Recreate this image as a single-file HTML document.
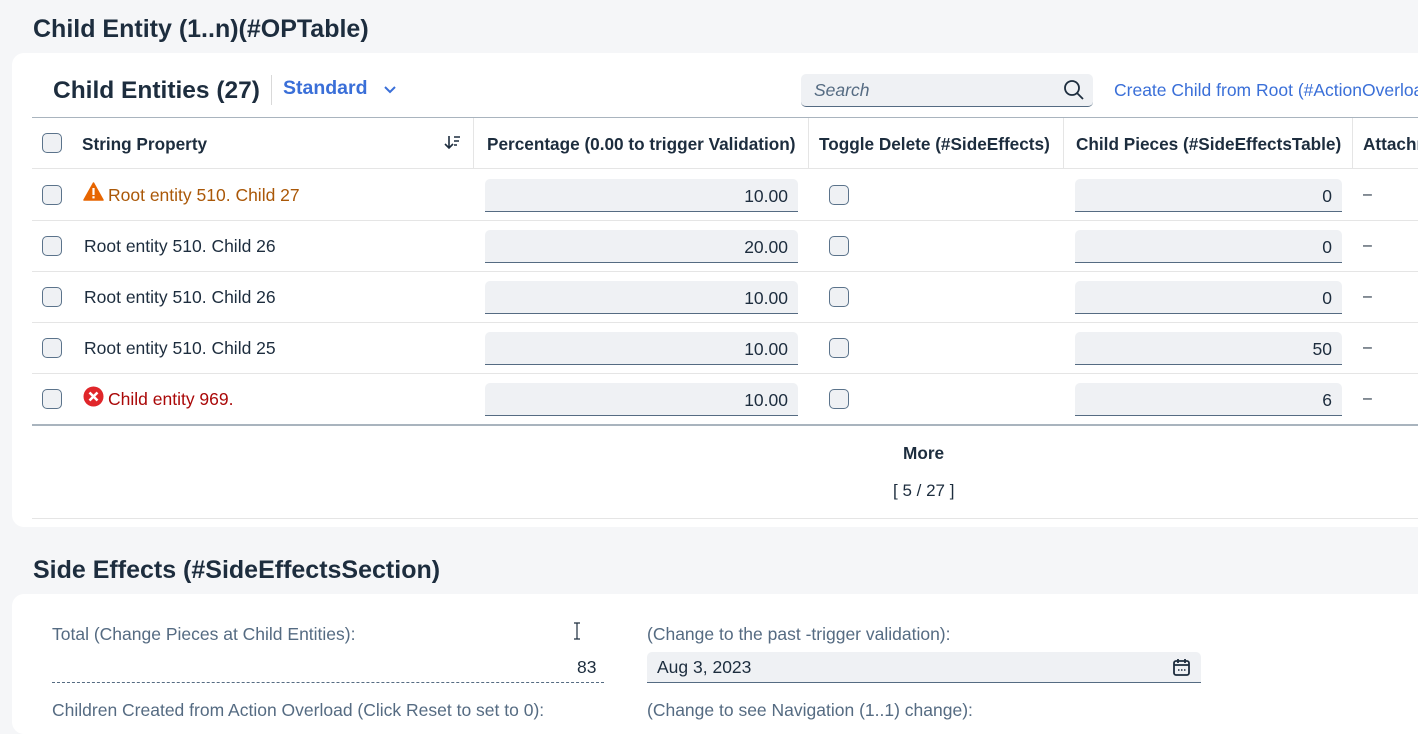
<!DOCTYPE html>
<html><head><meta charset="utf-8"><style>
*{box-sizing:border-box;margin:0;padding:0}
body{width:1418px;height:718px;overflow:hidden;background:#f5f6f8;font-family:"Liberation Sans",sans-serif;color:#1d2d3e;position:relative}
.a{position:absolute;white-space:nowrap}
.card{position:absolute;background:#fff;border-radius:12px}
.h1{font-size:25px;font-weight:bold}
.hl{position:absolute;height:1px;background:#e5e5e5}
.vl{position:absolute;width:1px;background:#e5e5e5}
.cb{position:absolute;width:20px;height:20px;border:1px solid #5b738b;border-radius:5px;background:#eff1f4}
.th{position:absolute;font-size:17.2px;font-weight:bold;top:134px}
.td{position:absolute;font-size:17.5px}
.inp{position:absolute;height:33px;background:#eff1f4;border-radius:5px 5px 0 0;border-bottom:1px solid #556b82;font-size:17.5px;text-align:right;padding:7px 10px 0 0}
.dash{position:absolute;font-size:16px;color:#1d2d3e}
</style></head><body>
<div class="a h1" style="left:33px;top:15px">Child Entity (1..n)(#OPTable)</div>
<div class="card" style="left:12px;top:53px;width:1420px;height:474px"></div>
<div class="a" style="left:53px;top:77px;font-size:24.5px;font-weight:bold">Child Entities (27)</div>
<div class="vl" style="left:271px;top:75px;height:30px;background:#d9d9d9"></div>
<div class="a" style="left:283px;top:77px;font-size:19.5px;font-weight:bold;color:#3a6fd8">Standard</div>
<svg class="a" style="left:383px;top:85px" width="14" height="10"><path d="M2 2l5 5 5-5" stroke="#3a6fd8" stroke-width="2" fill="none"/></svg>
<div class="a" style="left:801px;top:74px;width:292px;height:33px;background:#eff1f4;border-radius:5px;border-bottom:1px solid #556b82"></div>
<div class="a" style="left:814px;top:80px;font-size:17.5px;font-style:italic;color:#556b82">Search</div>
<svg class="a" style="left:1063px;top:79px" width="22" height="22"><circle cx="9" cy="9" r="7" stroke="#1d2d3e" stroke-width="1.8" fill="none"/><path d="M14 14l6 6" stroke="#1d2d3e" stroke-width="1.8"/></svg>
<div class="a" style="left:1114px;top:80px;font-size:17.5px;color:#3a6fd8">Create Child from Root (#ActionOverload)</div>

<div class="hl" style="left:32px;top:117px;width:1400px;background:#a9b4be"></div>
<div class="hl" style="left:32px;top:168px;width:1400px"></div>
<div class="hl" style="left:32px;top:220px;width:1400px"></div>
<div class="hl" style="left:32px;top:271px;width:1400px"></div>
<div class="hl" style="left:32px;top:322px;width:1400px"></div>
<div class="hl" style="left:32px;top:373px;width:1400px"></div>
<div class="hl" style="left:32px;top:424px;width:1400px;height:2px;background:#a9b4be"></div>
<div class="hl" style="left:32px;top:518px;width:1400px"></div>
<div class="vl" style="left:473px;top:118px;height:50px"></div>
<div class="vl" style="left:808px;top:118px;height:50px"></div>
<div class="vl" style="left:1063px;top:118px;height:50px"></div>
<div class="vl" style="left:1352px;top:118px;height:50px"></div>

<div class="cb" style="left:42px;top:133px"></div>
<div class="th" style="left:82px">String Property</div>
<svg class="a" style="left:444px;top:135px" width="18" height="16"><path d="M5 1v12M1 9l4 4 4-4M10 2h6M10 6h5M10 10h3" stroke="#1d2d3e" stroke-width="1.6" fill="none"/></svg>
<div class="th" style="left:487px">Percentage (0.00 to trigger Validation)</div>
<div class="th" style="left:819px">Toggle Delete (#SideEffects)</div>
<div class="th" style="left:1076px">Child Pieces (#SideEffectsTable)</div>
<div class="th" style="left:1363px">Attachments</div>

<div class="cb" style="left:42px;top:185px"></div>
<svg class="a" style="left:83px;top:182px" width="21" height="19"><path d="M10.5 1L20 18H1z" fill="#e76500" stroke="#e76500" stroke-linejoin="round" stroke-width="1.5"/><rect x="9.4" y="6" width="2.2" height="7" fill="#fff"/><rect x="9.4" y="14.2" width="2.2" height="2.2" fill="#fff"/></svg>
<div class="td" style="left:108px;top:185px;color:#aa5808">Root entity 510. Child 27</div>
<div class="inp" style="left:485px;top:179px;width:313px">10.00</div>
<div class="cb" style="left:829px;top:185px"></div>
<div class="inp" style="left:1075px;top:179px;width:267px">0</div>
<div class="dash" style="left:1363px;top:186px">–</div>

<div class="cb" style="left:42px;top:236px"></div>
<div class="td" style="left:84px;top:236px">Root entity 510. Child 26</div>
<div class="inp" style="left:485px;top:230px;width:313px">20.00</div>
<div class="cb" style="left:829px;top:236px"></div>
<div class="inp" style="left:1075px;top:230px;width:267px">0</div>
<div class="dash" style="left:1363px;top:237px">–</div>

<div class="cb" style="left:42px;top:287px"></div>
<div class="td" style="left:84px;top:287px">Root entity 510. Child 26</div>
<div class="inp" style="left:485px;top:281px;width:313px">10.00</div>
<div class="cb" style="left:829px;top:287px"></div>
<div class="inp" style="left:1075px;top:281px;width:267px">0</div>
<div class="dash" style="left:1363px;top:288px">–</div>

<div class="cb" style="left:42px;top:338px"></div>
<div class="td" style="left:84px;top:338px">Root entity 510. Child 25</div>
<div class="inp" style="left:485px;top:332px;width:313px">10.00</div>
<div class="cb" style="left:829px;top:338px"></div>
<div class="inp" style="left:1075px;top:332px;width:267px">50</div>
<div class="dash" style="left:1363px;top:339px">–</div>

<div class="cb" style="left:42px;top:389px"></div>
<svg class="a" style="left:83px;top:386px" width="21" height="21"><circle cx="10.5" cy="10.5" r="10" fill="#e0262a"/><path d="M6.5 6.5l8 8M14.5 6.5l-8 8" stroke="#fff" stroke-width="2.6"/></svg>
<div class="td" style="left:108px;top:389px;color:#aa0808">Child entity 969.</div>
<div class="inp" style="left:485px;top:383px;width:313px">10.00</div>
<div class="cb" style="left:829px;top:389px"></div>
<div class="inp" style="left:1075px;top:383px;width:267px">6</div>
<div class="dash" style="left:1363px;top:390px">–</div>

<div class="a" style="left:903px;top:443px;font-size:17.2px;font-weight:bold">More</div>
<div class="a" style="left:893px;top:481px;font-size:17px">[ 5 / 27 ]</div>

<div class="a h1" style="left:33px;top:556px">Side Effects (#SideEffectsSection)</div>
<div class="card" style="left:12px;top:594px;width:1420px;height:140px"></div>
<div class="a" style="left:52px;top:624px;font-size:17.5px;color:#556b82">Total (Change Pieces at Child Entities):</div>
<div class="a" style="left:577px;top:657px;font-size:17.5px">83</div>
<div class="a" style="left:52px;top:682px;width:552px;border-top:1px dashed #556b82"></div>
<div class="a" style="left:52px;top:700px;font-size:17.5px;color:#556b82">Children Created from Action Overload (Click Reset to set to 0):</div>
<svg class="a" style="left:572px;top:622px" width="10" height="18"><path d="M2 1h6M5 1v16M2 17h6" stroke="#1d2d3e" stroke-width="1.2" fill="none"/></svg>
<div class="a" style="left:647px;top:624px;font-size:17.5px;color:#556b82">(Change to the past -trigger validation):</div>
<div class="a" style="left:647px;top:652px;width:554px;height:31px;background:#eff1f4;border-radius:5px 5px 0 0;border-bottom:1px solid #556b82"></div>
<div class="a" style="left:657px;top:657px;font-size:17.5px">Aug 3, 2023</div>
<svg class="a" style="left:1172px;top:657px" width="20" height="20"><rect x="2" y="4" width="15" height="14" rx="2" stroke="#1d2d3e" stroke-width="1.8" fill="none"/><path d="M2 8h15M6 2v4M13 2v4" stroke="#1d2d3e" stroke-width="1.8"/><path d="M6 13h1.5M9 13h1.5M12 13h1.5" stroke="#1d2d3e" stroke-width="1.6"/></svg>
<div class="a" style="left:647px;top:700px;font-size:17.5px;color:#556b82">(Change to see Navigation (1..1) change):</div>
</body></html>
